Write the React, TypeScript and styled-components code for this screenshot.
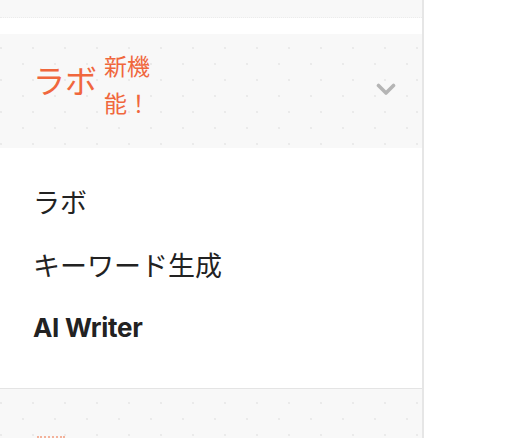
import { createGlobalStyle } from "styled-components";
import styled from "styled-components";

const GlobalStyle = createGlobalStyle`
  html, body {
    margin: 0;
    padding: 0;
    background: #ffffff;
  }
  body {
    font-family: "Noto Sans CJK JP", "Noto Sans", sans-serif;
    -webkit-font-smoothing: antialiased;
  }
`;

const ACCENT = "#f0673d";
const GREY_BG = "#f8f8f8";

const dotted = `
  background-color: ${GREY_BG};
  background-image:
    radial-gradient(circle, #e6e6e6 0.6px, transparent 1px),
    radial-gradient(circle, #e6e6e6 0.6px, transparent 1px);
  background-size: 32px 32px;
  background-position: 17px -2px, 7px 14px;
`;

const Sidebar = styled.nav`
  width: 422px;
  height: 438px;
  overflow: hidden;
  border-right: 2px solid #e6e6e6;
  display: flex;
  flex-direction: column;
`;

const TopBand = styled.div`
  height: 17px;
  flex: none;
  background: ${GREY_BG};
  border-bottom: 1px dotted #ececec;
  margin-bottom: 16px;
`;

const SectionHeader = styled.button`
  ${dotted}
  height: 114px;
  flex: none;
  border: 0;
  padding: 13px 26px 0 33px;
  display: flex;
  align-items: flex-start;
  justify-content: space-between;
  font: inherit;
  cursor: pointer;
  text-align: left;
`;

const Title = styled.div`
  display: flex;
  align-items: flex-start;
  gap: 7px;
  color: ${ACCENT};
`;

const TitleLabel = styled.span`
  font-size: 32px;
  line-height: 40px;
  margin-top: 12px;
`;

const NewBadge = styled.span`
  width: 50px;
  font-size: 23px;
  line-height: 37px;
  word-break: break-all;
`;

const Chevron = styled.svg`
  margin-top: 36px;
  flex: none;
`;

const MenuList = styled.ul`
  list-style: none;
  margin: 0;
  padding: 22px 0 29px;
  background: #ffffff;
  border-bottom: 1px solid #e4e4e4;
`;

const MenuItem = styled.li<{ $latin?: boolean }>`
  height: 63px;
  display: flex;
  align-items: center;
  padding-left: 33px;
  color: #222222;
  font-size: ${({ $latin }) => ($latin ? "26px" : "27px")};
  font-family: ${({ $latin }) =>
    $latin ? `Inter, "Noto Sans", sans-serif` : `"Noto Sans CJK JP", sans-serif`};
  font-weight: ${({ $latin }) => ($latin ? 700 : 400)};
  letter-spacing: ${({ $latin }) => ($latin ? "-0.3px" : "0")};
`;

const NextSection = styled.div`
  ${dotted}
  flex: 1;
  padding: 47px 0 0 37px;
`;

const NextIcon = styled.div`
  width: 28px;
  height: 20px;
  border-top: 2px dotted #f3b29b;
`;

export default function App() {
  return (
    <>
      <GlobalStyle />
      <Sidebar>
        <TopBand />
        <SectionHeader type="button" aria-expanded="true">
          <Title>
            <TitleLabel>ラボ</TitleLabel>
            <NewBadge>新機能！</NewBadge>
          </Title>
          <Chevron width="20" height="13" viewBox="0 0 20 13" aria-hidden="true">
            <polyline
              points="2.5,2.5 10,10 17.5,2.5"
              fill="none"
              stroke="#b5b5b5"
              strokeWidth="3.6"
              strokeLinecap="round"
              strokeLinejoin="round"
            />
          </Chevron>
        </SectionHeader>
        <MenuList>
          <MenuItem>ラボ</MenuItem>
          <MenuItem>キーワード生成</MenuItem>
          <MenuItem $latin>AI Writer</MenuItem>
        </MenuList>
        <NextSection>
          <NextIcon />
        </NextSection>
      </Sidebar>
    </>
  );
}
